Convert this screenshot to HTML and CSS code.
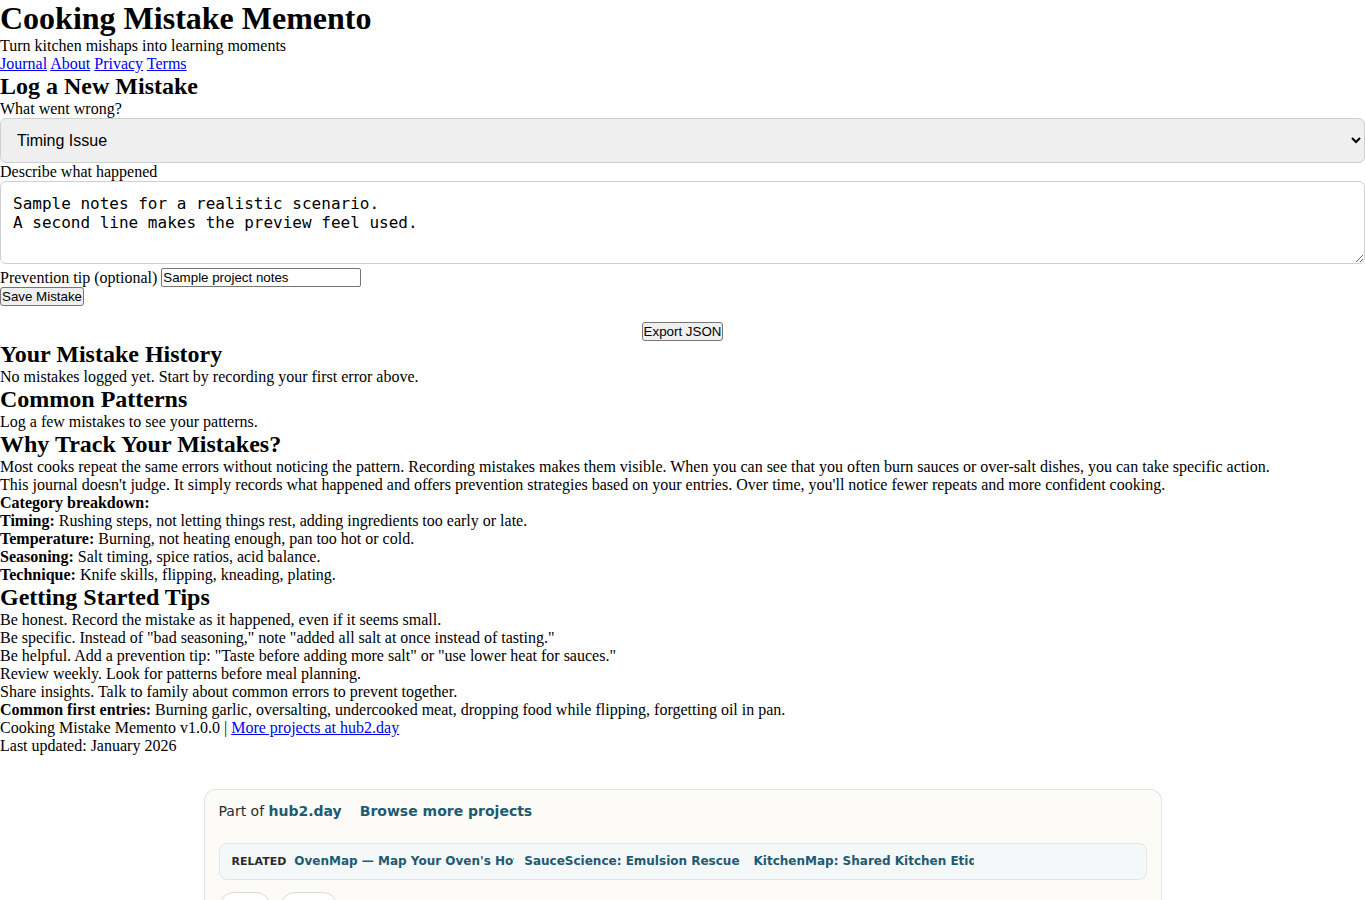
FILE: index.html
```html
<!DOCTYPE html>
<html lang="en">
<head>
<meta charset="utf-8">
<title>Cooking Mistake Memento</title>
<link rel="stylesheet" href="styles.css">
</head>
<body>
<header class="site-header">
  <h1 class="title">Cooking Mistake Memento</h1>
  <p class="tagline">Turn kitchen mishaps into learning moments</p>
  <nav class="nav">
    <a href="#">Journal</a>
    <a href="#">About</a>
    <a href="#">Privacy</a>
    <a href="#">Terms</a>
  </nav>
</header>

<main>
  <section class="log">
    <h2 class="heading">Log a New Mistake</h2>
    <form class="log-form">
      <label class="field-label" for="category">What went wrong?</label>
      <select id="category" class="select">
        <option>Timing Issue</option>
        <option>Temperature Problem</option>
        <option>Seasoning Error</option>
        <option>Technique Slip</option>
      </select>
      <label class="field-label" for="notes">Describe what happened</label>
      <textarea id="notes" class="notes" rows="3">Sample notes for a realistic scenario.
A second line makes the preview feel used.</textarea>
      <div class="tip-row">
        <label for="tip">Prevention tip (optional)</label>
        <input id="tip" class="tip-input" type="text" value="Sample project notes">
      </div>
      <div class="actions">
        <button type="button" class="btn">Save Mistake</button>
      </div>
    </form>
    <div class="export">
      <button type="button" class="btn">Export JSON</button>
    </div>
  </section>

  <section>
    <h2 class="heading">Your Mistake History</h2>
    <p>No mistakes logged yet. Start by recording your first error above.</p>
  </section>

  <section>
    <h2 class="heading">Common Patterns</h2>
    <p>Log a few mistakes to see your patterns.</p>
  </section>

  <section>
    <h2 class="heading">Why Track Your Mistakes?</h2>
    <p>Most cooks repeat the same errors without noticing the pattern. Recording mistakes makes them visible. When you can see that you often burn sauces or over-salt dishes, you can take specific action.</p>
    <p>This journal doesn't judge. It simply records what happened and offers prevention strategies based on your entries. Over time, you'll notice fewer repeats and more confident cooking.</p>
    <p><strong>Category breakdown:</strong></p>
    <ul class="plain-list">
      <li><strong>Timing:</strong> Rushing steps, not letting things rest, adding ingredients too early or late.</li>
      <li><strong>Temperature:</strong> Burning, not heating enough, pan too hot or cold.</li>
      <li><strong>Seasoning:</strong> Salt timing, spice ratios, acid balance.</li>
      <li><strong>Technique:</strong> Knife skills, flipping, kneading, plating.</li>
    </ul>
  </section>

  <section>
    <h2 class="heading">Getting Started Tips</h2>
    <ol class="plain-list">
      <li>Be honest. Record the mistake as it happened, even if it seems small.</li>
      <li>Be specific. Instead of "bad seasoning," note "added all salt at once instead of tasting."</li>
      <li>Be helpful. Add a prevention tip: "Taste before adding more salt" or "use lower heat for sauces."</li>
      <li>Review weekly. Look for patterns before meal planning.</li>
      <li>Share insights. Talk to family about common errors to prevent together.</li>
    </ol>
    <p><strong>Common first entries:</strong> Burning garlic, oversalting, undercooked meat, dropping food while flipping, forgetting oil in pan.</p>
  </section>
</main>

<footer class="site-footer">
  <p>Cooking Mistake Memento v1.0.0 | <a href="#">More projects at hub2.day</a></p>
  <p>Last updated: January 2026</p>
</footer>

<aside class="hub">
  <div class="hub-top">
    <span class="hub-part">Part of <a class="hub-link" href="#">hub2.day</a></span>
    <a class="hub-link hub-browse" href="#">Browse more projects</a>
  </div>
  <div class="hub-related">
    <span class="hub-related-label">Related</span>
    <a class="hub-related-link" href="#">OvenMap — Map Your Oven's Hot Spots</a>
    <a class="hub-related-link" href="#">SauceScience: Emulsion Rescue</a>
    <a class="hub-related-link" href="#">KitchenMap: Shared Kitchen Etiquette</a>
  </div>
  <div class="hub-pills">
    <button type="button" class="hub-pill hub-pill-share">Share</button>
    <button type="button" class="hub-pill hub-pill-feedback">Feedback</button>
  </div>
</aside>
</body>
</html>
```

FILE: styles.css
```css
html, body {
  margin: 0;
  padding: 0;
}

body {
  font-family: "Liberation Serif", "Times New Roman", serif;
  font-size: 16px;
  color: #000;
  background: #fff;
}

p {
  margin: 0;
}

.title {
  margin: 0;
  font-size: 32px;
  line-height: 37px;
}

.heading {
  margin: 0;
  font-size: 24px;
  line-height: 27px;
}

.nav a {
  color: #0000ee;
}

/* Mistake entry form */
.field-label {
  display: block;
}

.select {
  display: block;
  width: 100%;
  box-sizing: border-box;
  height: 45px;
  margin: 0;
  padding: 0 12px;
  font-family: "Liberation Sans", Arial, sans-serif;
  font-size: 16px;
  color: #000;
  background-color: #efefef;
  border: 1px solid #cfcfcf;
  border-radius: 6px;
}

.notes {
  display: block;
  width: 100%;
  box-sizing: border-box;
  margin: 0 0 4px;
  padding: 12px;
  font-family: "DejaVu Sans Mono", monospace;
  font-size: 16px;
  line-height: 19px;
  border: 1px solid #cfcfcf;
  border-radius: 6px;
}

.tip-row {
  height: 19px;
  line-height: 19px;
}

.tip-input {
  width: 200px;
  height: 19px;
  box-sizing: border-box;
  margin: 0;
  padding: 0 1px;
  font-family: "Liberation Sans", Arial, sans-serif;
  font-size: 13.33px;
  vertical-align: top;
  border: 1px solid #767676;
  border-radius: 2px;
}

.btn {
  margin: 0;
  padding: 1px 1px;
  font-family: "Liberation Sans", Arial, sans-serif;
  font-size: 13.33px;
  line-height: 15px;
  vertical-align: top;
  color: #000;
  background: #efefef;
  border: 1px solid #767676;
  border-radius: 3px;
}

.actions {
  height: 19px;
  line-height: 19px;
}

.export {
  height: 19px;
  margin-top: 16px;
  line-height: 19px;
  text-align: center;
}

.plain-list {
  list-style: none;
  margin: 0;
  padding: 0;
}

.site-footer a {
  color: #0000ee;
}

/* hub2.day network card */
.hub {
  max-width: 958px;
  height: 120px;
  margin: 34px auto 0;
  box-sizing: border-box;
  padding: 11px 14px 0;
  background: #fcfbf7;
  border: 1px solid #e4e2dc;
  border-bottom: none;
  border-radius: 12px 12px 0 0;
  font-family: "DejaVu Sans", Verdana, sans-serif;
  font-size: 14px;
  color: #2b2b2b;
}

.hub-top {
  display: flex;
  align-items: center;
  gap: 18px;
  line-height: 20px;
}

.hub-link {
  color: #1d5a73;
  font-weight: bold;
  text-decoration: none;
}

.hub-related {
  display: flex;
  align-items: center;
  gap: 10px;
  margin-top: 22px;
  padding: 9px 12px;
  background: #f5f8f9;
  border: 1px solid #e1e6ea;
  border-radius: 8px;
  line-height: 17px;
}

.hub-related-label {
  margin-right: -2px;
  font-size: 11px;
  font-weight: bold;
  text-transform: uppercase;
  color: #2b2b2b;
}

.hub-related-link {
  max-width: 220px;
  overflow: hidden;
  white-space: nowrap;
  font-size: 12px;
  font-weight: bold;
  color: #1d5a73;
  text-decoration: none;
}

.hub-related-link:last-child {
  margin-left: 4px;
}

.hub-pills {
  display: flex;
  gap: 9px;
  margin-top: 12px;
}

.hub-pill {
  height: 30px;
  padding: 0;
  font-family: "DejaVu Sans", Verdana, sans-serif;
  font-size: 12px;
  color: #fcfbf7;
  background: #fff;
  border: 1px solid #dcdad4;
  border-radius: 16px;
}

.hub-pill-share {
  width: 52px;
}

.hub-pill-feedback {
  width: 58px;
}
```
